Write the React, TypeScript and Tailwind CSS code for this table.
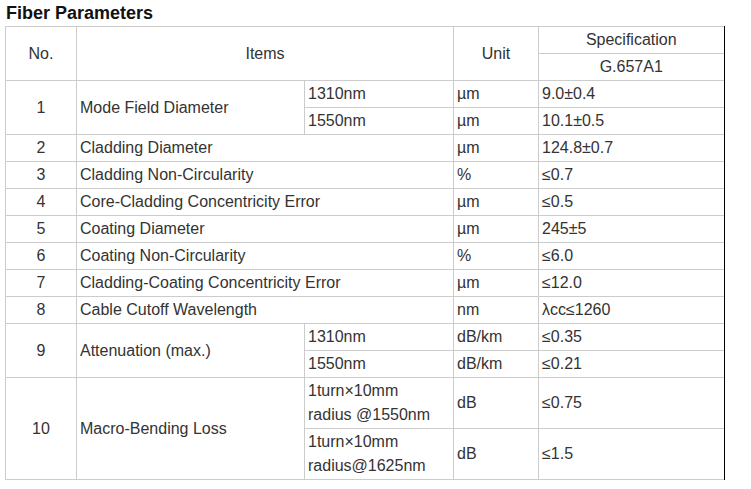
import React from "react";

type Row = {
  no: string;
  item: string;
  subs?: { cond: React.ReactNode; unit: string; spec: string; tall?: boolean }[];
  unit?: string;
  spec?: string;
};

const rows: Row[] = [
  {
    no: "1",
    item: "Mode Field Diameter",
    subs: [
      { cond: "1310nm", unit: "µm", spec: "9.0±0.4" },
      { cond: "1550nm", unit: "µm", spec: "10.1±0.5" },
    ],
  },
  { no: "2", item: "Cladding Diameter", unit: "µm", spec: "124.8±0.7" },
  { no: "3", item: "Cladding Non-Circularity", unit: "%", spec: "≤0.7" },
  { no: "4", item: "Core-Cladding Concentricity Error", unit: "µm", spec: "≤0.5" },
  { no: "5", item: "Coating Diameter", unit: "µm", spec: "245±5" },
  { no: "6", item: "Coating Non-Circularity", unit: "%", spec: "≤6.0" },
  { no: "7", item: "Cladding-Coating Concentricity Error", unit: "µm", spec: "≤12.0" },
  { no: "8", item: "Cable Cutoff Wavelength", unit: "nm", spec: "λcc≤1260" },
  {
    no: "9",
    item: "Attenuation (max.)",
    subs: [
      { cond: "1310nm", unit: "dB/km", spec: "≤0.35" },
      { cond: "1550nm", unit: "dB/km", spec: "≤0.21" },
    ],
  },
  {
    no: "10",
    item: "Macro-Bending Loss",
    subs: [
      {
        cond: (
          <>
            1turn×10mm
            <br />
            radius @1550nm
          </>
        ),
        unit: "dB",
        spec: "≤0.75",
        tall: true,
      },
      {
        cond: (
          <>
            1turn×10mm
            <br />
            radius@1625nm
          </>
        ),
        unit: "dB",
        spec: "≤1.5",
        tall: true,
      },
    ],
  },
];

const base = "border-t border-b border-l border-[#cccccc] px-[3px] py-0 align-middle";
const cell = `${base} border-r`;
// last column: no right border, the wrapper draws the dark edge
const lastCell = base;

export default function App() {
  return (
    <div className="min-h-screen bg-white font-['Liberation_Sans',Arial,sans-serif] text-[#333333]">
      {/* Title */}
      <h2 className="pl-[6px] pt-[2px] text-[18px] leading-[22px] font-bold text-[#111111]">
        Fiber Parameters
      </h2>

      {/* Parameters table */}
      <div className="ml-[5px] mt-[2px] w-fit border-r border-[#000000]">
        <table className="w-[718px] table-fixed border-collapse text-[16px] leading-[24px]">
          <colgroup>
            <col className="w-[71px]" />
            <col className="w-[228px]" />
            <col className="w-[149px]" />
            <col className="w-[85px]" />
            <col className="w-[185px]" />
          </colgroup>
          <thead>
            <tr className="h-[27px]">
              <th rowSpan={2} className={`${cell} text-center font-normal`}>
                No.
              </th>
              <th rowSpan={2} colSpan={2} className={`${cell} text-center font-normal`}>
                Items
              </th>
              <th rowSpan={2} className={`${cell} text-center font-normal`}>
                Unit
              </th>
              <th className={`${lastCell} text-center font-normal`}>Specification</th>
            </tr>
            <tr className="h-[27px]">
              <th className={`${lastCell} text-center font-normal`}>G.657A1</th>
            </tr>
          </thead>
          <tbody>
            {rows.map((r) =>
              r.subs ? (
                r.subs.map((s, i) => (
                  <tr key={r.no + "-" + i} className={s.tall ? "h-[51px]" : "h-[27px]"}>
                    {i === 0 && (
                      <>
                        <td rowSpan={r.subs!.length} className={`${cell} text-center`}>
                          {r.no}
                        </td>
                        <td rowSpan={r.subs!.length} className={cell}>
                          {r.item}
                        </td>
                      </>
                    )}
                    <td className={cell}>{s.cond}</td>
                    <td className={cell}>{s.unit}</td>
                    <td className={lastCell}>{s.spec}</td>
                  </tr>
                ))
              ) : (
                <tr key={r.no} className="h-[27px]">
                  <td className={`${cell} text-center`}>{r.no}</td>
                  <td colSpan={2} className={cell}>
                    {r.item}
                  </td>
                  <td className={cell}>{r.unit}</td>
                  <td className={lastCell}>{r.spec}</td>
                </tr>
              )
            )}
          </tbody>
        </table>
      </div>
    </div>
  );
}
